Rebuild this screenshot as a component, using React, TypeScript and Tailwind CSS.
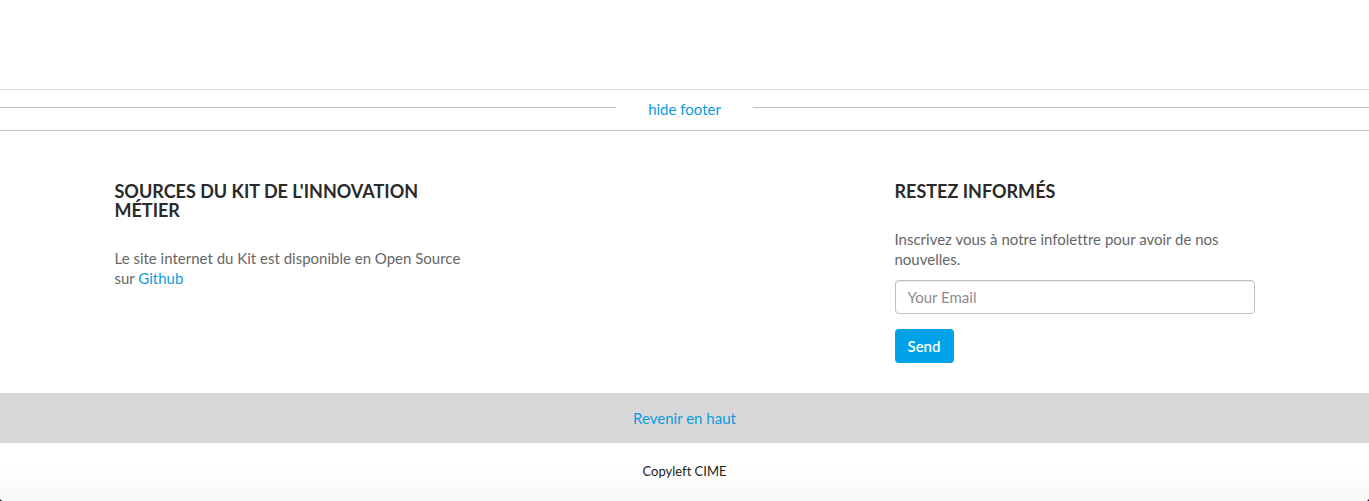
const headingClass =
  "mb-[28px] text-[18px] leading-[19px] font-bold uppercase text-[#2a2a2a]";
const linkClass = "text-[#0c9ce0] hover:underline";

function FooterToggle() {
  return (
    <div className="flex h-[42px] items-start border-t border-b border-t-[#dddddd] border-b-[#c0c0c0]">
      <span className="mt-[17px] h-px w-[45%] bg-[#c0c0c0]" />
      <div className="mt-[9px] w-[10%] text-center">
        <a href="#footer" className={linkClass}>
          hide footer
        </a>
      </div>
      <span className="mt-[17px] h-px w-[45%] bg-[#c0c0c0]" />
    </div>
  );
}

function Sources() {
  return (
    <section className="px-[15px]">
      <h2 className={headingClass}>Sources du Kit de l'Innovation Métier</h2>
      <p>
        Le site internet du Kit est disponible en Open Source sur{" "}
        <a href="#github" className={linkClass}>
          Github
        </a>
      </p>
    </section>
  );
}

function Newsletter() {
  return (
    <section className="px-[15px] md:col-start-3">
      <h2 className={headingClass}>Restez informés</h2>
      <form onSubmit={(event) => event.preventDefault()}>
        <label htmlFor="email" className="mb-[11px] block">
          Inscrivez vous à notre infolettre pour avoir de nos nouvelles.
        </label>
        <input
          id="email"
          type="email"
          placeholder="Your Email"
          className="block h-[34px] w-full rounded border border-[#c0c0c0] bg-white px-3 text-[15px] shadow-[inset_0_1px_1px_rgba(0,0,0,0.08)] outline-none placeholder:text-[#8c8c8c] focus:border-[#00a2e8]"
        />
        <button
          type="submit"
          className="mt-[15px] h-[34px] rounded bg-[#00a2e8] px-[13px] text-[15px] font-semibold text-white"
        >
          Send
        </button>
      </form>
    </section>
  );
}

export default function App() {
  return (
    <div className="bg-[#14222c] font-['Lato',sans-serif] text-[15px] leading-5 text-[#666666] [font-variant-ligatures:none]">
      <div className="min-h-screen overflow-hidden rounded-b-[4px] bg-white">
        <main className="h-[89px]" />
        <footer id="footer">
          <FooterToggle />
          <div className="mx-auto grid max-w-[1170px] gap-y-8 pt-[51px] pb-[30px] md:grid-cols-3">
            <Sources />
            <Newsletter />
          </div>
          <div className="bg-[#d8d8d8] py-[15px] text-center">
            <a href="#top" className={linkClass}>
              Revenir en haut
            </a>
          </div>
          <div className="bg-linear-to-b from-white from-40% to-[#f8f8f8] pt-[18px] pb-5 text-center text-[13px] text-[#222222]">
            Copyleft CIME
          </div>
        </footer>
      </div>
    </div>
  );
}
